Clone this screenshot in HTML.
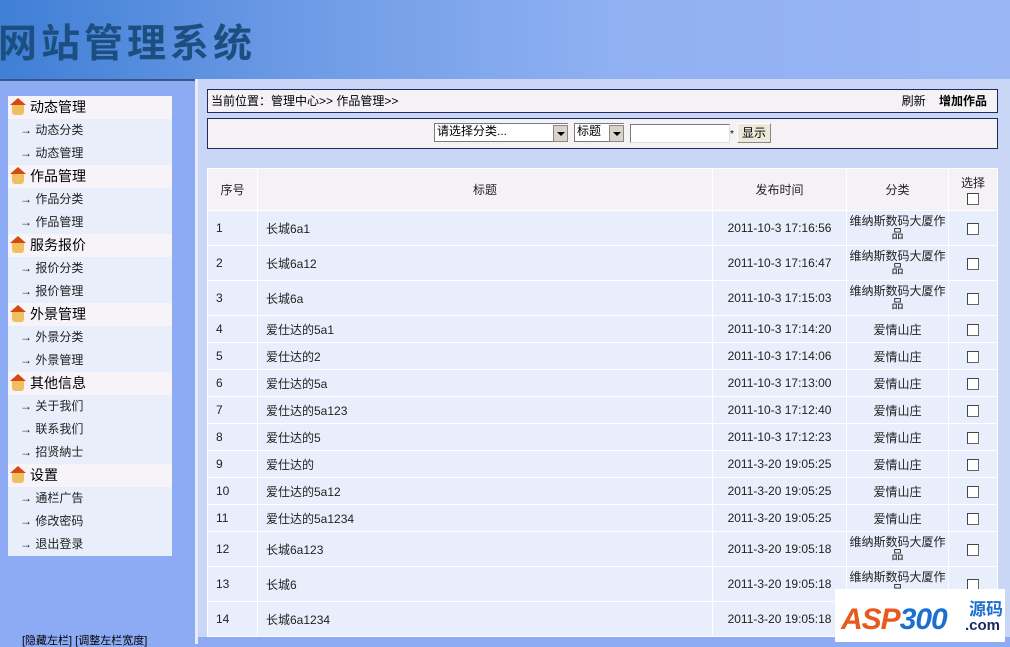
<!DOCTYPE html>
<html><head><meta charset="utf-8">
<style>
*{margin:0;padding:0;box-sizing:border-box}
body{width:1010px;height:644px;overflow:hidden;position:relative;background:#8dabf4;font-family:"Liberation Sans","Noto Sans CJK SC","WenQuanYi Zen Hei",sans-serif;font-size:12px;color:#000}
.abs{position:absolute}
#hdr{left:0;top:0;width:1010px;height:79px;background:linear-gradient(90deg,#3f7fd6 0%,#6e9be6 30%,#8fb0f2 60%,#9ab6f5 100%)}
#hdr .t{left:-2px;top:14px;font-size:39px;font-weight:bold;color:#1d4e80;letter-spacing:4px;font-family:"Noto Sans CJK SC","WenQuanYi Zen Hei",sans-serif;line-height:54px}
#hline{left:0;top:79px;width:195px;height:2px;background:#3e5488}
#side{left:0;top:81px;width:195px;height:563px;background:#8dabf4}
#menu{left:8px;top:96px;width:164px}
.mh{height:23px;background:#f6f4f8;font-size:14px;line-height:23px;padding-left:22px;position:relative}
.mh:before{content:"";position:absolute;left:4px;top:8px;width:12px;height:11px;background:#f0c060;border-radius:0 0 3px 3px}
.mh:after{content:"";position:absolute;left:2px;top:2px;width:0;height:0;border-left:8px solid transparent;border-right:8px solid transparent;border-bottom:7px solid #d44a10}
.mi{height:23px;background:#e9eefb;line-height:23px;padding-left:12px;color:#222}
#strip{left:195px;top:79px;width:3px;height:565px;background:#e6ecfb}
#cont{left:198px;top:79px;width:812px;height:558px;background:#c9d6f6}
.box{background:#f5f2f6;border:1px solid #1c2c5c}
#bc{left:207px;top:89px;width:791px;height:24px;line-height:22px;padding-left:3px}
#flt{left:207px;top:118px;width:791px;height:31px}
table{position:absolute;left:207px;top:168px;width:791px;border-collapse:collapse;border:1px solid #1c2c5c;background:#e8eefb;table-layout:fixed}
td{border:1px solid #fff;font-size:12px;padding:0 8px;color:#222;vertical-align:middle}
tr.h td{background:#f5f2f6;font-size:12px;height:42px;text-align:center}
.cb{display:inline-block;width:12px;height:12px;border:1px solid #666;border-top-color:#444;border-left-color:#444;background:#fff;vertical-align:middle}
.c{text-align:center}
.w{padding:0 2px!important;line-height:13px;text-align:center}
.sel{position:absolute;height:19px;background:#fff;border:1px solid #7a7a7a;border-right:none;font-size:12px;line-height:14px;padding-left:2px}
.arr{position:absolute;width:15px;height:17px;background:#d8d4cc;border:1px solid #888;top:1px;right:0}
.arr:after{content:"";position:absolute;left:3px;top:6px;border-left:4px solid transparent;border-right:4px solid transparent;border-top:4px solid #000}
</style></head><body>
<div id="hdr" class="abs"><div class="t abs">网站管理系统</div></div>
<div id="hline" class="abs"></div>
<div id="side" class="abs"></div>
<div id="menu" class="abs">
<div class="mh">动态管理</div><div class="mi">→ 动态分类</div><div class="mi">→ 动态管理</div>
<div class="mh">作品管理</div><div class="mi">→ 作品分类</div><div class="mi">→ 作品管理</div>
<div class="mh">服务报价</div><div class="mi">→ 报价分类</div><div class="mi">→ 报价管理</div>
<div class="mh">外景管理</div><div class="mi">→ 外景分类</div><div class="mi">→ 外景管理</div>
<div class="mh">其他信息</div><div class="mi">→ 关于我们</div><div class="mi">→ 联系我们</div><div class="mi">→ 招贤納士</div>
<div class="mh">设置</div><div class="mi">→ 通栏广告</div><div class="mi">→ 修改密码</div><div class="mi">→ 退出登录</div>
</div>
<div class="abs" style="left:22px;top:636px;font-size:11px;line-height:10px">[隐藏左栏] [调整左栏宽度]</div>
<div id="strip" class="abs"></div>
<div id="cont" class="abs"></div>
<div id="bc" class="abs box">当前位置：管理中心&gt;&gt; 作品管理&gt;&gt;<span style="position:absolute;right:10px;top:0">刷新 &nbsp;&nbsp;&nbsp;<b>增加作品</b></span></div>
<div id="flt" class="abs box">
<div class="sel" style="left:226px;top:4px;width:134px">请选择分类...<div class="arr"></div></div>
<div class="sel" style="left:366px;top:4px;width:50px">标题<div class="arr"></div></div>
<div class="abs" style="left:422px;top:5px;width:100px;height:19px;background:#fff;border:1px solid #7a7a7a;border-right-color:#ddd;border-bottom-color:#ddd"></div>
<div class="abs" style="left:522px;top:10px;font-size:10px">*</div>
<div class="abs" style="left:529px;top:4px;width:34px;height:20px;background:#ece9d8;border:1px solid #888;border-top-color:#fff;border-left-color:#fff;text-align:center;line-height:18px">显示</div>
</div>
<table>
<colgroup><col style="width:50px"><col><col style="width:134px"><col style="width:102px"><col style="width:49px"></colgroup>
<tr class="h"><td>序号</td><td>标题</td><td>发布时间</td><td>分类</td><td style="padding:0">选择<br><span class="cb"></span></td></tr>
<tr style="height:35px"><td>1</td><td>长城6a1</td><td class="c">2011-10-3 17:16:56</td><td class="w">维纳斯数码大厦作品</td><td class="c"><span class="cb"></span></td></tr>
<tr style="height:35px"><td>2</td><td>长城6a12</td><td class="c">2011-10-3 17:16:47</td><td class="w">维纳斯数码大厦作品</td><td class="c"><span class="cb"></span></td></tr>
<tr style="height:35px"><td>3</td><td>长城6a</td><td class="c">2011-10-3 17:15:03</td><td class="w">维纳斯数码大厦作品</td><td class="c"><span class="cb"></span></td></tr>
<tr style="height:27px"><td>4</td><td>爱仕达的5a1</td><td class="c">2011-10-3 17:14:20</td><td class="c">爱情山庄</td><td class="c"><span class="cb"></span></td></tr>
<tr style="height:27px"><td>5</td><td>爱仕达的2</td><td class="c">2011-10-3 17:14:06</td><td class="c">爱情山庄</td><td class="c"><span class="cb"></span></td></tr>
<tr style="height:27px"><td>6</td><td>爱仕达的5a</td><td class="c">2011-10-3 17:13:00</td><td class="c">爱情山庄</td><td class="c"><span class="cb"></span></td></tr>
<tr style="height:27px"><td>7</td><td>爱仕达的5a123</td><td class="c">2011-10-3 17:12:40</td><td class="c">爱情山庄</td><td class="c"><span class="cb"></span></td></tr>
<tr style="height:27px"><td>8</td><td>爱仕达的5</td><td class="c">2011-10-3 17:12:23</td><td class="c">爱情山庄</td><td class="c"><span class="cb"></span></td></tr>
<tr style="height:27px"><td>9</td><td>爱仕达的</td><td class="c">2011-3-20 19:05:25</td><td class="c">爱情山庄</td><td class="c"><span class="cb"></span></td></tr>
<tr style="height:27px"><td>10</td><td>爱仕达的5a12</td><td class="c">2011-3-20 19:05:25</td><td class="c">爱情山庄</td><td class="c"><span class="cb"></span></td></tr>
<tr style="height:27px"><td>11</td><td>爱仕达的5a1234</td><td class="c">2011-3-20 19:05:25</td><td class="c">爱情山庄</td><td class="c"><span class="cb"></span></td></tr>
<tr style="height:35px"><td>12</td><td>长城6a123</td><td class="c">2011-3-20 19:05:18</td><td class="w">维纳斯数码大厦作品</td><td class="c"><span class="cb"></span></td></tr>
<tr style="height:35px"><td>13</td><td>长城6</td><td class="c">2011-3-20 19:05:18</td><td class="w">维纳斯数码大厦作品</td><td class="c"><span class="cb"></span></td></tr>
<tr style="height:35px"><td>14</td><td>长城6a1234</td><td class="c">2011-3-20 19:05:18</td><td class="w">维纳斯数码大厦作品</td><td class="c"><span class="cb"></span></td></tr>
</table>
<div class="abs" style="left:835px;top:589px;width:170px;height:53px;background:#fff">
<div class="abs" style="left:6px;top:14px;font-size:30px;font-weight:bold;font-style:italic;color:#e85a1c;letter-spacing:-1px">ASP<span style="color:#1c6fd0">300</span></div>
<div class="abs" style="left:134px;top:6px;font-size:17px;font-weight:bold;color:#1c6fd0">源码</div>
<div class="abs" style="left:130px;top:28px;font-size:15px;font-weight:bold;color:#1a2a60">.com</div>
</div>
</body></html>
